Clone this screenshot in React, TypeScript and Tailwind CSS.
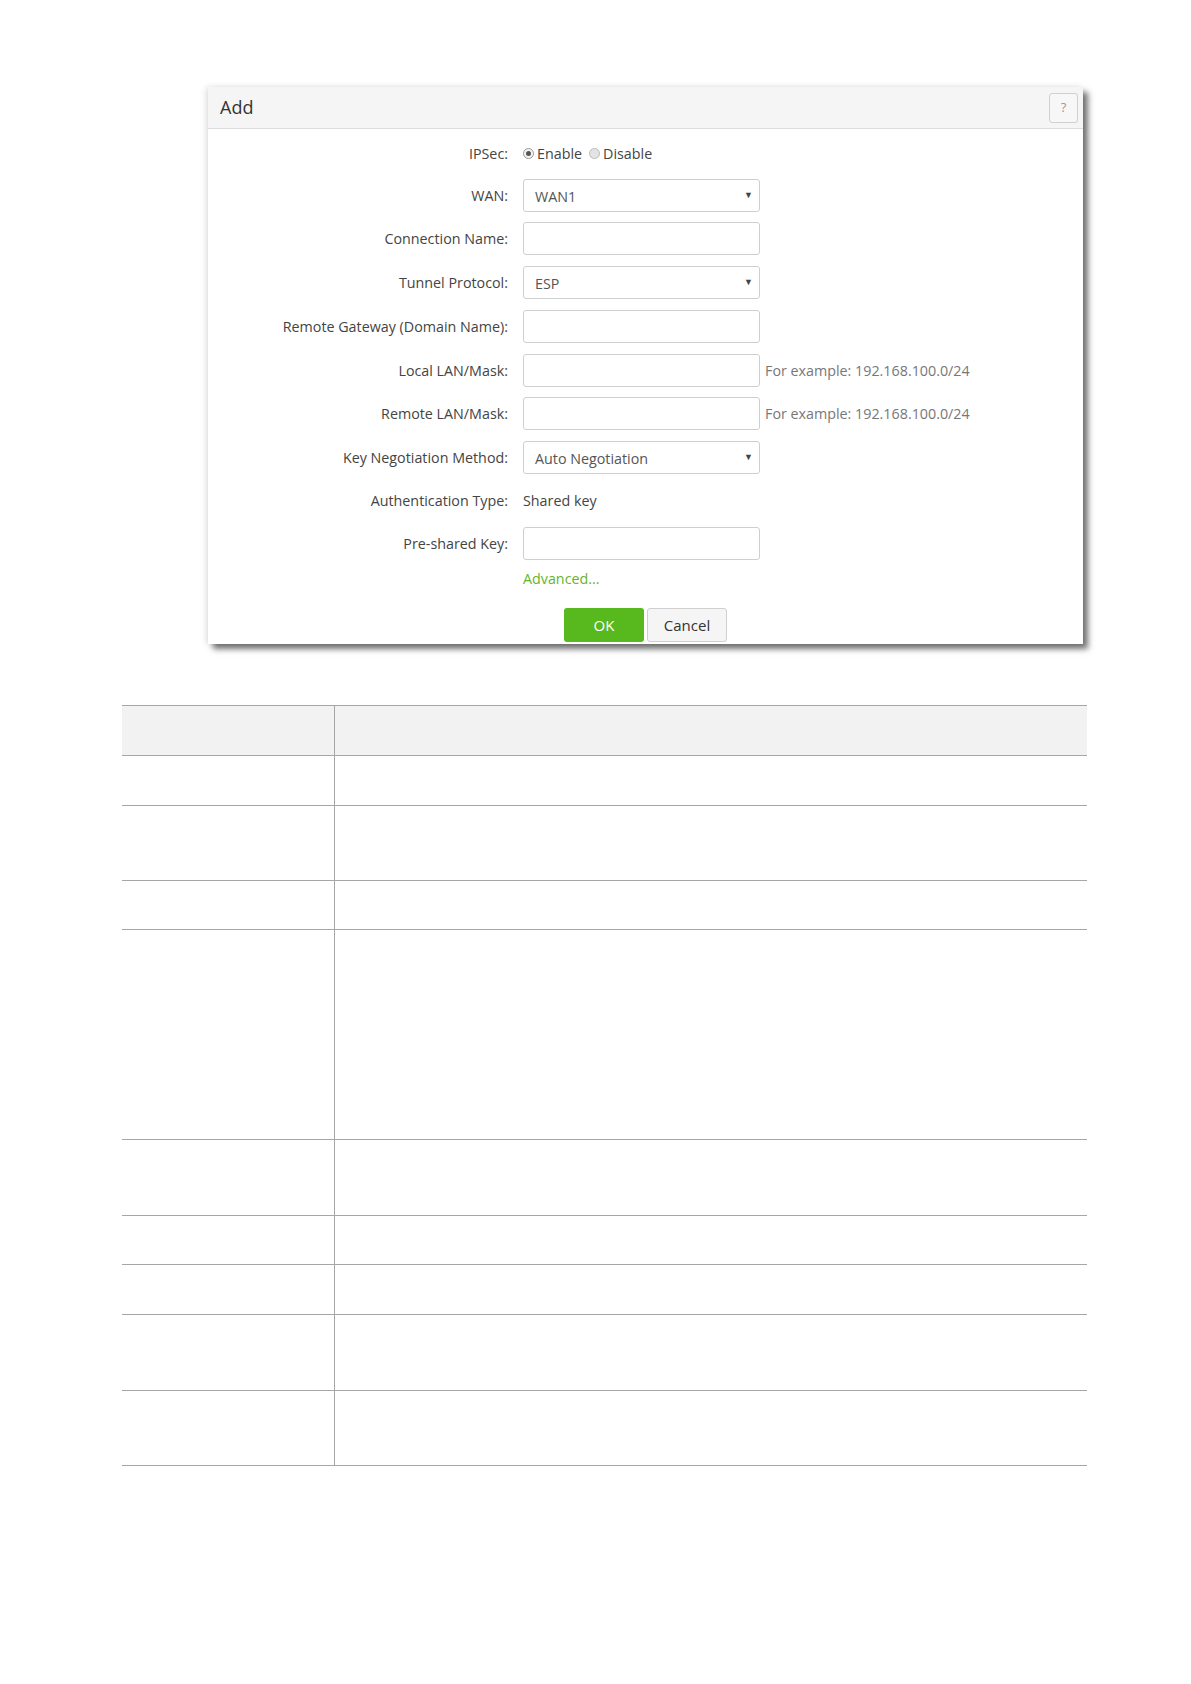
import React from "react";

const font = { fontFamily: '"Open Sans", "Noto Sans", sans-serif' };

function Label({ children }: { children: React.ReactNode }) {
  return (
    <div className="w-[315px] shrink-0 pr-[15px] text-right text-[14.3px] text-[#444] leading-[33px] whitespace-nowrap">
      {children}
    </div>
  );
}

function Input() {
  return <div className="h-[33px] w-[237px] rounded-[3px] border border-[#cfcfcf] bg-white" />;
}

function Select({ value }: { value: string }) {
  return (
    <div className="relative flex h-[33px] w-[237px] items-center rounded-[3px] border border-[#cfcfcf] bg-white pl-[11px] text-[14.3px] text-[#555]">
      <span className="pt-[3px]">{value}</span>
      <span className="absolute right-[6px] top-[8px] text-[9px] text-[#444]">▼</span>
    </div>
  );
}

function Row({ label, children, mt }: { label?: string; children: React.ReactNode; mt: string }) {
  return (
    <div className={`flex h-[33px] items-center ${mt}`}>
      <Label>{label}</Label>
      <div className="flex items-center">{children}</div>
    </div>
  );
}

const rowHeights = [50, 75, 49, 210, 76, 49, 50, 76, 75];

export default function App() {
  return (
    <div className="min-h-[1684px] w-[1191px] bg-white" style={font}>
      <div className="pt-[87px] pl-[208px]">
        <div className="w-[875px] h-[557px] bg-white shadow-[5px_5px_6px_rgba(0,0,0,0.55),-2px_0_6px_rgba(0,0,0,0.12)]">
          <div className="flex h-[42px] items-center justify-between border-b border-[#dcdcdc] bg-[#f5f5f5] pl-[12px] pr-[5px]">
            <span className="text-[18px] text-[#333]">Add</span>
            <div className="flex h-[30px] w-[29px] items-center justify-center rounded-[3px] border border-[#d0d0d0] bg-[#f7f7f7] text-[13px] text-[#999]">
              ?
            </div>
          </div>

          <div className="flex flex-col">
            <Row label="IPSec:" mt="mt-[8px]">
              <div className="flex items-center text-[14.3px] text-[#444]">
                <span className="flex h-[11px] w-[11px] items-center justify-center rounded-full border border-[#999] bg-[#f4f4f4]">
                  <span className="h-[5px] w-[5px] rounded-full bg-[#555]" />
                </span>
                <span className="ml-[3px]">Enable</span>
                <span className="ml-[7px] h-[11px] w-[11px] rounded-full border border-[#bbb] bg-[#e4e4e4]" />
                <span className="ml-[3px]">Disable</span>
              </div>
            </Row>
            <Row label="WAN:" mt="mt-[9px]">
              <Select value="WAN1" />
            </Row>
            <Row label="Connection Name:" mt="mt-[10px]">
              <Input />
            </Row>
            <Row label="Tunnel Protocol:" mt="mt-[11px]">
              <Select value="ESP" />
            </Row>
            <Row label="Remote Gateway (Domain Name):" mt="mt-[11px]">
              <Input />
            </Row>
            <Row label="Local LAN/Mask:" mt="mt-[11px]">
              <Input />
              <span className="ml-[5px] text-[14.3px] text-[#777]">For example: 192.168.100.0/24</span>
            </Row>
            <Row label="Remote LAN/Mask:" mt="mt-[10px]">
              <Input />
              <span className="ml-[5px] text-[14.3px] text-[#777]">For example: 192.168.100.0/24</span>
            </Row>
            <Row label="Key Negotiation Method:" mt="mt-[11px]">
              <Select value="Auto Negotiation" />
            </Row>
            <Row label="Authentication Type:" mt="mt-[10px]">
              <span className="text-[14.3px] text-[#444]">Shared key</span>
            </Row>
            <Row label="Pre-shared Key:" mt="mt-[10px]">
              <Input />
            </Row>
            <div className="mt-[8px] flex h-[22px] items-center">
              <div className="w-[315px] shrink-0" />
              <span className="text-[14.3px] text-[#66b52c]">Advanced...</span>
            </div>
            <div className="mt-[18px] flex h-[34px] pl-[356px]">
              <div className="flex h-[34px] w-[80px] items-center justify-center rounded-[3px] bg-[#57b91d] text-[15px] text-white">
                OK
              </div>
              <div className="ml-[3px] flex h-[34px] w-[80px] items-center justify-center rounded-[3px] border border-[#cfcfcf] bg-[#f5f5f5] text-[15px] text-[#333]">
                Cancel
              </div>
            </div>
          </div>
        </div>
      </div>

      <div className="ml-[122px] mt-[61px] w-[965px] border-t border-[#a6a6a6]">
        <div className="flex h-[50px] border-b border-[#a6a6a6] bg-[#f2f2f2]">
          <div className="w-[213px] border-r border-[#a6a6a6]" />
          <div className="flex-1" />
        </div>
        {rowHeights.map((h, i) => (
          <div key={i} className="flex border-b border-[#a6a6a6]" style={{ height: h }}>
            <div className="w-[213px] border-r border-[#a6a6a6]" />
            <div className="flex-1" />
          </div>
        ))}
      </div>
    </div>
  );
}
